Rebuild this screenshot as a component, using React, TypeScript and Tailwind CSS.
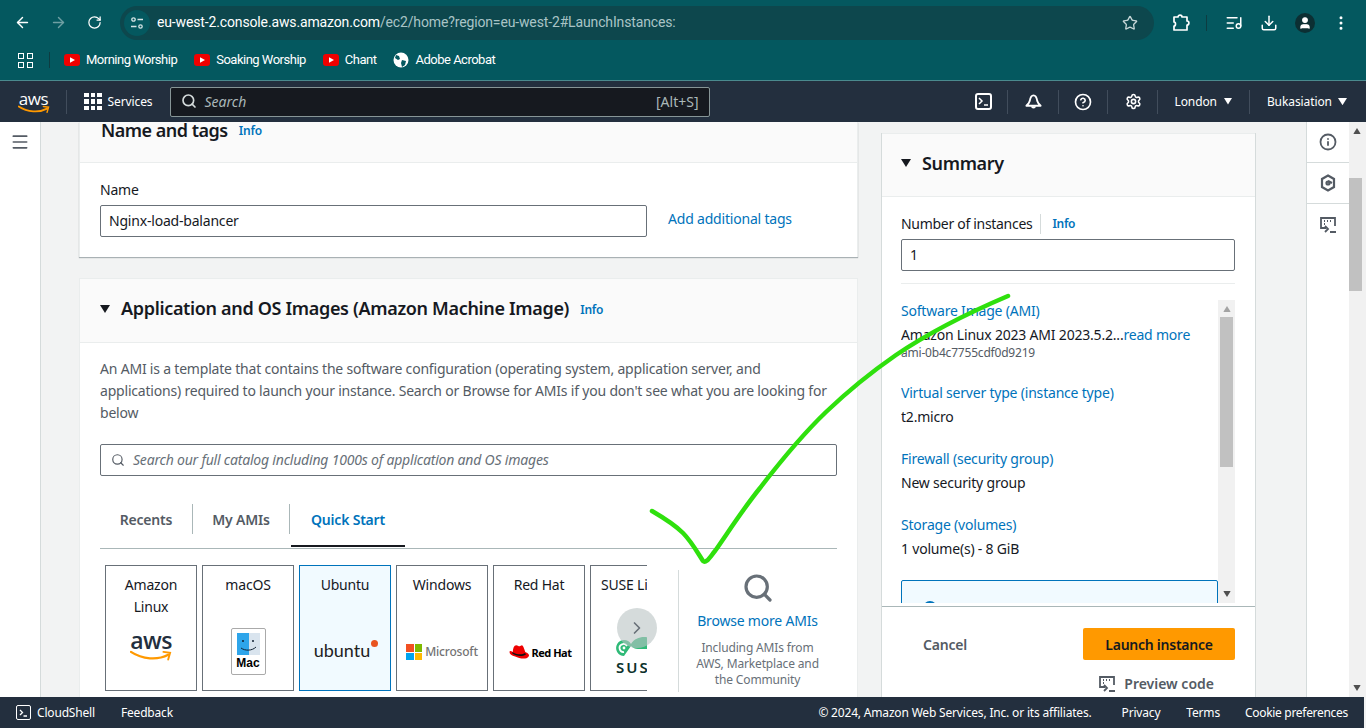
import React from 'react';
import {
    ArrowLeft,
    ArrowRight,
    RotateCw,
    Star,
    Download,
    EllipsisVertical,
    ListMusic,
    Search,
    Menu,
    Info,
    CircleHelp,
    Settings,
    ChevronRight,
    User,
} from 'lucide-react';

const sans = "font-['Noto_Sans','Open_Sans',sans-serif]";

const YoutubeBadge = () => (
    <svg width="16" height="12" viewBox="0 0 16 12" className="flex-shrink-0">
        <rect width="16" height="12" rx="3" fill="#f00000" />
        <path d="M6 3.2v5.6L11 6z" fill="#fff" />
    </svg>
);

const Caret = ({ className = '', size = 10 }: { className?: string; size?: number }) => (
    <svg width={size} height={size * 0.8} viewBox="0 0 10 8" className={className}>
        <path d="M0 0h10L5 8z" fill="currentColor" />
    </svg>
);

const PreviewIcon = ({ size = 18 }: { size?: number }) => (
    <svg width={size} height={size} viewBox="0 0 18 18" fill="none" stroke="currentColor" strokeWidth="1.8">
        <path d="M7 12H2V2h14v8" />
        <path d="M5 5h1M8 5h1M11 5h1M5 8h1" strokeWidth="2" />
        <path d="M6 10l3 3-3 3M11 16h6" />
    </svg>
);

const AwsLogo = ({ width = 32, dark = false }: { width?: number; dark?: boolean }) => (
    <div className="flex flex-col items-center" style={{ width }}>
        <span
            className={`font-['Open_Sans',sans-serif] leading-none tracking-tight ${dark ? 'font-semibold text-[#232f3e] text-[23px]' : 'font-medium text-white text-[17px]'}`}
        >
            aws
        </span>
        <svg viewBox="0 0 44 12" width={width} className="-mt-0.5">
            <path d="M1 2c12 8 28 9 39 3" fill="none" stroke="#ff9900" strokeWidth="2.4" strokeLinecap="round" />
            <path d="M35 2l7 1-2 7" fill="none" stroke="#ff9900" strokeWidth="2" strokeLinecap="round" />
        </svg>
    </div>
);

const bookmarks = ['Morning Worship', 'Soaking Worship', 'Chant'];

const BrowserChrome = () => (
    <div className="h-[81px] bg-[#04585f] border-b border-[#4a8a8e] flex-shrink-0 font-['Roboto',sans-serif] tracking-normal">
        {/* Toolbar */}
        <div className="h-[45px] flex items-center pl-[14px] pr-[12px] text-white">
            <ArrowLeft className="w-[17px] h-[17px]" />
            <ArrowRight className="w-[17px] h-[17px] ml-[19px] text-[#6f9fa3]" />
            <RotateCw className="w-[15px] h-[15px] ml-[20px]" />
            <div className="ml-[18px] w-[1034px] h-[34px] rounded-full bg-[#0d474d] flex items-center pl-[4px] pr-[16px]">
                <div className="w-[26px] h-[26px] rounded-full bg-[#04585f] flex items-center justify-center">
                    <svg width="14" height="14" viewBox="0 0 14 14" fill="none" stroke="#d5e4e5" strokeWidth="1.3">
                        <circle cx="3.5" cy="3.5" r="1.7" />
                        <path d="M7.5 3.5H13M1 10.5h5.5" />
                        <circle cx="10.5" cy="10.5" r="1.7" />
                    </svg>
                </div>
                <div className="ml-[7px] text-[14px] tracking-[-0.14px] flex-1">
                    <span className="text-white">eu-west-2.console.aws.amazon.com</span>
                    <span className="text-[#a9c4c6]">/ec2/home?region=eu-west-2#LaunchInstances:</span>
                </div>
                <Star className="w-[16px] h-[16px] text-[#c5d6d7]" />
            </div>
            <svg width="18" height="18" viewBox="0 0 18 18" fill="none" stroke="#fff" strokeWidth="1.7" className="ml-[18px]">
                <path d="M2 3h4c0-2.5 4-2.5 4 0h5v4c2.5 0 2.5 4 0 4v5H2v-4c2 0 2-4 0-4z" strokeLinejoin="round" />
            </svg>
            <div className="w-px h-[16px] bg-[#0d3c41] ml-[16px]" />
            <ListMusic className="w-[18px] h-[18px] ml-[18px]" />
            <Download className="w-[18px] h-[18px] ml-[17px]" />
            <div className="ml-[17px] w-[20px] h-[20px] rounded-full bg-[#0c2f33] flex items-center justify-center">
                <User className="w-[14px] h-[14px]" fill="#fff" />
            </div>
            <EllipsisVertical className="w-[18px] h-[18px] ml-[17px]" />
        </div>
        {/* Bookmarks */}
        <div className="h-[30px] flex items-center pl-[18px] text-[13px] text-white tracking-[-0.5px]">
            <div className="grid grid-cols-2 gap-[3px]">
                <span className="w-[6px] h-[6px] border border-white" />
                <span className="w-[6px] h-[6px] border border-white" />
                <span className="w-[6px] h-[6px] border border-white" />
                <span className="w-[6px] h-[6px] border border-white" />
            </div>
            <div className="w-px h-[16px] bg-[#0d3c41] ml-[16px] mr-[14px]" />
            {bookmarks.map((label) => (
                <div key={label} className="flex items-center gap-[6px] mr-[17px]">
                    <YoutubeBadge />
                    <span>{label}</span>
                </div>
            ))}
            <div className="flex items-center gap-[6px]">
                <svg width="16" height="16" viewBox="0 0 16 16" className="flex-shrink-0">
                    <circle cx="8" cy="8" r="7.5" fill="#fff" />
                    <path d="M3 3l3 1 1 3-2 1-3-2zM9 8l4 1-1 4-3 2-1-4z" fill="#04585f" />
                </svg>
                <span>Adobe Acrobat</span>
            </div>
        </div>
    </div>
);

const NavDivider = () => <div className="w-px h-[24px] bg-[#414d5c] flex-shrink-0" />;

const TopNav = () => (
    <div className={`h-[41px] bg-[#232f3e] flex items-center flex-shrink-0 text-white text-[12px] tracking-[-0.1px] ${sans}`}>
        <div className="w-[66px] flex justify-center pl-[1px]">
            <AwsLogo width={32} />
        </div>
        <NavDivider />
        <div className="grid grid-cols-3 gap-[2px] ml-[17px]">
            {Array.from({ length: 9 }).map((_, i) => (
                <span key={i} className="w-[4.5px] h-[4.5px] bg-white" />
            ))}
        </div>
        <span className="ml-[6px] w-[62px]">Services</span>
        <div className="w-[540px] h-[30px] bg-[#16191f] border border-[#879596] rounded-[2px] flex items-center px-[10px] pb-[1px] text-[#aab7b8] tracking-normal">
            <Search className="w-[16px] h-[16px] text-[#d5dbdb]" strokeWidth={2.5} />
            <span className="ml-[8px] italic text-[14px] flex-1">Search</span>
            <span className="text-[14px]">[Alt+S]</span>
        </div>
        <div className="ml-[265px] w-[17px] h-[17px] flex-shrink-0 border-2 border-white rounded-[3px] flex items-center justify-center">
            <svg width="11" height="9" viewBox="0 0 11 9" fill="none" stroke="#fff" strokeWidth="1.5">
                <path d="M1 1l3 3-3 3M6 8h4" />
            </svg>
        </div>
        <div className="ml-[15px]"><NavDivider /></div>
        <svg width="17" height="18" viewBox="0 0 18 18" fill="none" stroke="#fff" strokeWidth="2" className="ml-[17px] flex-shrink-0">
            <path d="M9 2C6 2 5.500 5 5 8c-.5 2-2 3.500-3.500 5h15C15 11.500 13.500 10 13 8c-.5-3-1-6-4-6z" strokeLinejoin="round" />
            <path d="M6.500 13.500a2.500 2.500 0 0 0 5 0z" fill="#fff" stroke="none" />
        </svg>
        <div className="ml-[16px]"><NavDivider /></div>
        <CircleHelp className="w-[18px] h-[18px] ml-[15px] flex-shrink-0" strokeWidth={2.2} />
        <div className="ml-[15px]"><NavDivider /></div>
        <Settings className="w-[17px] h-[17px] ml-[17px] flex-shrink-0" strokeWidth={2.2} />
        <div className="ml-[15px]"><NavDivider /></div>
        <span className="ml-[17px]">London</span>
        <Caret className="ml-[7px] flex-shrink-0" size={8} />
        <div className="ml-[17px]"><NavDivider /></div>
        <span className="ml-[17px]">Bukasiation</span>
        <Caret className="ml-[6px] flex-shrink-0" size={9} />
    </div>
);

const Tile = ({ label, selected, children }: { label: string; selected?: boolean; children: React.ReactNode }) => (
    <div
        className={`w-[92px] h-[126px] flex-shrink-0 border flex flex-col items-center pt-[8px] text-[14px] leading-[22px] text-center text-[#16191f] overflow-hidden
            ${selected ? 'border-[#0073bb] bg-[#f1faff]' : 'border-[#687078] bg-white'}`}
    >
        <div className="h-[44px] px-[6px] whitespace-nowrap">
            {label.split('|').map((line) => (
                <div key={line}>{line}</div>
            ))}
        </div>
        <div className="flex-1 flex items-center justify-center w-full pb-[18px]">{children}</div>
    </div>
);

const AmiTiles = () => (
    <div className="relative mt-[16px] flex ml-[5px]">
        <div className="w-[542px] h-[127px] flex gap-[5px] overflow-hidden">
            <Tile label="Amazon|Linux">
                <AwsLogo width={42} dark />
            </Tile>
            <Tile label="macOS">
                <div className="w-[35px] h-[47px] mt-[32px] flex-shrink-0 border border-[#aaa] rounded-[2px] flex flex-col items-center pt-[4px] bg-white">
                    <svg width="23" height="22" viewBox="0 0 23 22">
                        <rect width="23" height="22" fill="#d9e4ee" />
                        <rect width="12" height="22" fill="#2ea5ea" />
                        <circle cx="6" cy="8" r="1" fill="#123" />
                        <circle cx="16" cy="8" r="1" fill="#123" />
                        <path d="M4 15c4 3 11 3 15-1" fill="none" stroke="#123" strokeWidth="1" />
                    </svg>
                    <span className="text-[12px] leading-[16px] font-['Liberation_Sans',sans-serif] font-semibold text-black tracking-normal">Mac</span>
                </div>
            </Tile>
            <Tile label="Ubuntu" selected>
                <div className="flex items-start pt-[10px] ml-[2px]">
                    <span className="font-['Lato',sans-serif] text-[18px] leading-[22px] text-[#222] tracking-normal">ubuntu</span>
                    <span className="w-[7px] h-[7px] rounded-full bg-[#e95420] mt-[1px] ml-[1px]" />
                </div>
            </Tile>
            <Tile label="Windows">
                <div className="flex items-center gap-[3px] pt-[14px]">
                    <div className="grid grid-cols-2 gap-px w-[16px] h-[16px]">
                        <span className="bg-[#f25022]" />
                        <span className="bg-[#7fba00]" />
                        <span className="bg-[#00a4ef]" />
                        <span className="bg-[#ffb900]" />
                    </div>
                    <span className="text-[12px] font-medium text-[#737373] tracking-[-0.2px]">Microsoft</span>
                </div>
            </Tile>
            <Tile label="Red Hat">
                <div className="flex items-center gap-[2px] pt-[16px]">
                    <svg width="23" height="18" viewBox="0 0 20 16">
                        <path d="M5 7c0-3 1-6 3-6 1 0 2 1 3 1l2-1c1 0 2 3 3 6 3 1 4 3 3 4-2 3-8 2-12 0-3-1-5-2-5-4 0-1 1-1 3 0z" fill="#e00" />
                        <path d="M4.500 7c3 2 8 3 11.500 1l.5 1.500c-4 2-9 1-12-1z" fill="#111" />
                    </svg>
                    <span className="text-[11px] font-bold text-black tracking-[-0.5px]">Red Hat</span>
                </div>
            </Tile>
            <div className="w-[92px] h-[126px] flex-shrink-0 border border-[#687078] border-r-0 bg-white pt-[8px] pl-[10px] text-[14px] leading-[22px] text-[#16191f] whitespace-nowrap overflow-hidden">
                SUSE Linux
                <svg width="38" height="22" viewBox="0 0 38 22" className="mt-[39px] ml-[15px]">
                    <path d="M8 21A8 8 0 1 1 15 9c3-5 8-7 13-7 5 0 10 3 10 8v4H22c-3 0-5-1-7-3" fill="#30ba78" />
                    <path d="M8 17a4 4 0 1 1 3-6" fill="none" stroke="#fff" strokeWidth="1.8" />
                    <circle cx="8" cy="13" r="1.400" fill="#fff" />
                </svg>
                <div className="ml-[15px] mt-[3px] text-[15px] leading-[14px] font-semibold tracking-[2px] text-[#0c322c]">SUSE</div>
            </div>
        </div>
        {/* Scroll arrow sits over the last tile */}
        <div className="absolute left-[512px] top-[43px] w-[40px] h-[40px] rounded-full bg-[#b9c3c3]/60 flex items-center justify-center">
            <ChevronRight className="w-[20px] h-[20px] text-[#687078]" />
        </div>
    </div>
);

const MainColumn = () => (
    <div className="w-[779px] flex-shrink-0 flex flex-col">
        {/* Name and tags */}
        <section className="bg-white shadow-[0_1px_1px_rgba(0,28,36,0.3)] border-x border-[#eaeded]">
            <div className="h-[41px] bg-[#fafafa] border-b border-[#eaeded] pl-[21px] flex items-start">
                <h2 className="text-[18px] leading-[16px] font-semibold text-[#16191f] tracking-[-0.5px]">Name and tags</h2>
                <span className="ml-[11px] mt-[1px] text-[12px] font-semibold text-[#0073bb] leading-[16px]">Info</span>
            </div>
            <div className="h-[94px] px-[20px] pt-[16px]">
                <div className="text-[14px] leading-[22px] text-[#16191f]">Name</div>
                <div className="flex items-center mt-[4px]">
                    <div className="w-[547px] h-[32px] border border-[#687078] rounded-[2px] flex items-center px-[8px] pb-[1px] text-[14px] text-[#16191f]">
                        Nginx-load-balancer
                    </div>
                    <span className="ml-[21px] text-[14px] text-[#0073bb] -mt-[6px]">Add additional tags</span>
                </div>
            </div>
        </section>

        {/* Application and OS Images */}
        <section className="mt-[21px] bg-white border border-[#eaeded] border-b-0 flex-1 overflow-hidden">
            <div className="h-[64px] bg-[#fafafa] border-b border-[#eaeded] pl-[20px] flex items-center pb-[4px]">
                <Caret className="text-[#16191f]" />
                <h2 className="ml-[11px] text-[18px] font-semibold text-[#16191f] tracking-[-0.33px]">
                    Application and OS Images (Amazon Machine Image)
                </h2>
                <span className="ml-[11px] mt-[2px] text-[12px] font-semibold text-[#0073bb]">Info</span>
            </div>
            <div className="px-[20px] pt-[15px]">
                <p className="text-[14px] leading-[22px] text-[#545b64] w-[737px]">
                    An AMI is a template that contains the software configuration (operating system, application server, and applications) required to launch your instance. Search or Browse for AMIs if you don't see what you are looking for below
                </p>
                <div className="mt-[20px] w-[737px] h-[32px] border border-[#687078] rounded-[2px] flex items-center px-[10px] pb-[1px] text-[14px] italic text-[#687078]">
                    <Search className="w-[14px] h-[14px] mr-[8px] text-[#545b64]" />
                    Search our full catalog including 1000s of application and OS images
                </div>

                {/* Tabs */}
                <div className="mt-[20px] w-[737px] h-[53px] border-b border-[#aab7b8] flex text-[14px] font-semibold text-[#545b64] pb-[1px]">
                    <div className="w-[93px] flex items-center justify-center h-[30px] mt-[8px] border-r border-[#aab7b8]">Recents</div>
                    <div className="w-[97px] flex items-center justify-center h-[30px] mt-[8px] border-r border-[#aab7b8]">My AMIs</div>
                    <div className="ml-[1px] w-[114px] flex items-center justify-center text-[#0073bb] border-b-2 border-[#16191f] pb-[2px]">Quick Start</div>
                </div>

                <div className="flex">
                    <AmiTiles />
                    <div className="ml-[31px] mt-[21px] w-[158px] h-[122px] border-l border-[#d5dbdb] flex flex-col items-center flex-shrink-0">
                        <Search className="w-[32px] h-[32px] text-[#687078] mt-[2px]" strokeWidth={2.4} />
                        <div className="mt-[7px] text-[14px] leading-[20px] text-[#0073bb]">Browse more AMIs</div>
                        <div className="mt-[9px] text-[12px] leading-[16px] text-[#687078] text-center tracking-[-0.15px]">
                            Including AMIs from<br />AWS, Marketplace and<br />the Community
                        </div>
                    </div>
                </div>
            </div>
        </section>
    </div>
);

const SummaryItem = ({ title, children, last }: { title: string; children: React.ReactNode; last?: boolean }) => (
    <div className={last ? 'mb-[21px]' : 'mb-[22px]'}>
        <div className="text-[14px] leading-[20px] text-[#0073bb]">{title}</div>
        <div className="mt-[4px] text-[14px] leading-[20px] text-[#16191f]">{children}</div>
    </div>
);

const SummaryPanel = () => (
    <aside className="w-[375px] flex-shrink-0 ml-[23px] mt-[11px] flex flex-col bg-white border-x border-[#d5dbdb]">
        <div className="h-[64px] bg-[#fafafa] border-b border-[#eaeded] border-t pl-[19px] pb-[4px] flex items-center flex-shrink-0">
            <Caret className="text-[#16191f]" />
            <h2 className="ml-[11px] text-[18px] font-semibold text-[#16191f] tracking-[-0.33px]">Summary</h2>
        </div>
        <div className="flex-shrink-0 pl-[19px] pr-[20px] pt-[17px]">
            <div className="flex items-center text-[14px] leading-[20px] text-[#16191f] tracking-[-0.3px]">
                Number of instances
                <span className="ml-[8px] border-l border-[#d5dbdb] pl-[11px] text-[12px] font-semibold text-[#0073bb]">Info</span>
            </div>
            <div className="mt-[5px] h-[32px] border border-[#687078] rounded-[2px] flex items-center px-[8px] pb-[1px] text-[14px] text-[#16191f]">1</div>
            <div className="mt-[12px] border-t border-[#eaeded]" />
        </div>
        <div className="mt-[16px] ml-[19px] mr-[20px] h-[303px] flex-shrink-0 flex overflow-hidden">
            <div className="w-[317px] pt-[1px] overflow-hidden">
                <div className="mb-[22px]">
                    <div className="text-[14px] leading-[20px] text-[#0073bb]">Software Image (AMI)</div>
                    <div className="mt-[4px] text-[14px] leading-[20px] text-[#16191f]">
                        Amazon Linux 2023 AMI 2023.5.2...<span className="text-[#0073bb]">read more</span>
                    </div>
                    <div className="text-[12px] leading-[16px] text-[#545b64]">ami-0b4c7755cdf0d9219</div>
                </div>
                <SummaryItem title="Virtual server type (instance type)">t2.micro</SummaryItem>
                <SummaryItem title="Firewall (security group)">New security group</SummaryItem>
                <SummaryItem title="Storage (volumes)" last>1 volume(s) - 8 GiB</SummaryItem>
                <div className="h-[60px] border border-[#0073bb] rounded-[2px] bg-[#f1faff] pt-[20px] pl-[21px]">
                    <div className="w-[14px] h-[14px] rounded-full border-2 border-[#0073bb]" />
                </div>
            </div>
            <div className="w-[17px] bg-[#f1f1f1] flex flex-col items-center justify-between py-[5px] relative">
                <Caret className="text-[#a3a3a3] rotate-180 scale-75" />
                <div className="absolute left-[2px] top-[17px] w-[13px] h-[150px] bg-[#c1c1c1]" />
                <Caret className="text-[#505050] scale-75" />
            </div>
        </div>
        <div className="flex-1 border-t border-[#aab7b8] mt-[3px] pl-[21px] pr-[20px]">
            <div className="flex items-center mt-[21px]">
                <span className="ml-[20px] text-[14px] font-semibold text-[#545b64]">Cancel</span>
                <div className="ml-auto w-[152px] h-[32px] rounded-[2px] bg-[#ff9900] flex items-center justify-center text-[14px] font-semibold text-[#16191f] tracking-[-0.25px]">
                    Launch instance
                </div>
            </div>
            <div className="flex items-center justify-end mt-[13px] pr-[21px] text-[14px] font-semibold text-[#545b64] gap-[8px] tracking-normal">
                <PreviewIcon />
                Preview code
            </div>
        </div>
    </aside>
);

const ToolsRail = () => (
    <div className="ml-[50px] w-[43px] flex-shrink-0 bg-white border-l border-[#d5dbdb] text-[#545b64]">
        <div className="h-[41px] flex items-center justify-center border-b border-[#d5dbdb]">
            <Info className="w-[18px] h-[18px]" strokeWidth={2.4} />
        </div>
        <div className="h-[41px] flex items-center justify-center border-b border-[#d5dbdb]">
            <svg width="16" height="18" viewBox="0 0 16 18" fill="none" stroke="currentColor" strokeWidth="2.2">
                <path d="M8 1.500l6 3.500v8l-6 3.500-6-3.500V5z" />
                <path d="M8 7l4 2" />
                <circle cx="8" cy="9" r="1.500" />
            </svg>
        </div>
        <div className="h-[41px] flex items-center justify-center">
            <PreviewIcon />
        </div>
    </div>
);

const Footer = () => (
    <div className={`h-[31px] w-[1364px] bg-[#232f3e] flex items-center flex-shrink-0 text-white text-[12px] tracking-[-0.18px] pl-[16px] pr-[16px] ${sans}`}>
        <div className="w-[15px] h-[15px] border-[1.5px] border-white rounded-[2px] flex items-center justify-center">
            <svg width="9" height="8" viewBox="0 0 9 8" fill="none" stroke="#fff" strokeWidth="1.300">
                <path d="M1 1l2.500 2.500L1 6M4.500 7H8" />
            </svg>
        </div>
        <span className="ml-[6px]">CloudShell</span>
        <span className="ml-[26px]">Feedback</span>
        <span className="ml-auto">© 2024, Amazon Web Services, Inc. or its affiliates.</span>
        <span className="ml-[30px]">Privacy</span>
        <span className="ml-[26px]">Terms</span>
        <span className="ml-[25px] tracking-[-0.3px]">Cookie preferences</span>
    </div>
);

export default function App() {
    return (
        <div className={`relative w-[1366px] h-[728px] overflow-hidden flex flex-col bg-[#f2f3f3] tracking-[-0.2px] ${sans}`}>
            <BrowserChrome />
            <TopNav />
            <div className="flex-1 min-h-0 flex">
                <div className="w-[41px] flex-shrink-0 bg-white border-r border-[#d5dbdb] flex justify-center pt-[10px] text-[#545b64]">
                    <Menu className="w-[20px] h-[20px]" />
                </div>
                <div className="flex-1 min-w-0 flex pl-[38px] overflow-hidden">
                    <MainColumn />
                    <SummaryPanel />
                    <ToolsRail />
                </div>
                <div className="w-[17px] flex-shrink-0 pr-[2px] bg-[#f1f1f1] flex flex-col items-center justify-between py-[5px] relative">
                    <Caret className="text-[#505050] rotate-180 scale-75" />
                    <div className="absolute left-0 top-[56px] w-[13px] h-[113px] bg-[#c1c1c1]" />
                    <Caret className="text-[#505050] scale-75" />
                </div>
            </div>
            <Footer />
            {/* Hand drawn check mark on top of the page */}
            <svg className="absolute left-0 top-0 pointer-events-none" width="1366" height="728" fill="none">
                <path
                    d="M652 511c12 7 22 13 31 22 8 8 13 17 20 28 3 3 7-4 12-10 14-20 28-42 45-63 20-26 42-53 66-76 22-21 44-39 70-57 34-23 72-42 112-59"
                    stroke="#2fe00d"
                    strokeWidth="4.5"
                    strokeLinecap="round"
                />
            </svg>
        </div>
    );
}
